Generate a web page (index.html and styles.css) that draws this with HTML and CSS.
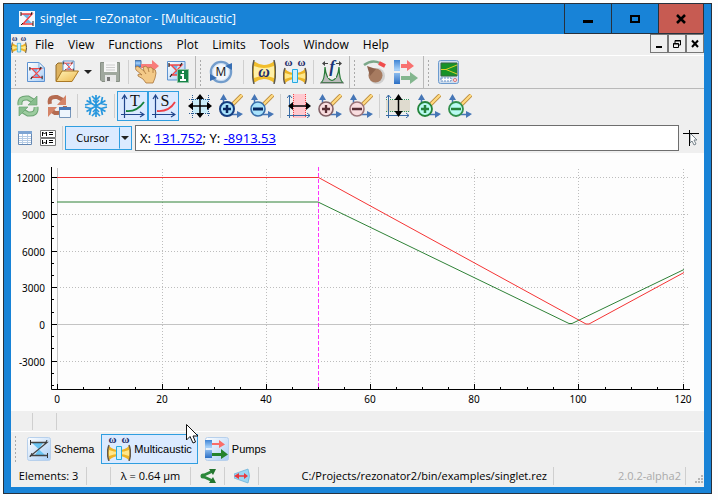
FILE: index.html
```html
<!DOCTYPE html>
<html lang="en">
<head>
<meta charset="utf-8">
<title>singlet — reZonator - [Multicaustic]</title>
<link rel="stylesheet" href="styles.css">
</head>
<body>
<svg class="defs" aria-hidden="true">
  <defs>
    <linearGradient id="paper" x1="0" y1="0" x2="1" y2="1"><stop offset="0" stop-color="#fff"/><stop offset="1" stop-color="#a9cdf5"/></linearGradient>
    <linearGradient id="folder" x1="0" y1="0" x2="1" y2="1"><stop offset="0" stop-color="#fff3b8"/><stop offset="1" stop-color="#edb94f"/></linearGradient>
    <linearGradient id="tube" x1="0" y1="0" x2="0" y2="1"><stop offset="0" stop-color="#3f84d4"/><stop offset=".4" stop-color="#a8d2fa"/><stop offset="1" stop-color="#2c6fc4"/></linearGradient>
    <symbol id="resonator" viewBox="0 0 16 16">
      <path d="M3 3 13 13H6L10 3z" fill="#6fb6ee"/>
      <path d="M1 3H14L4 13H15M3 3 13 13" stroke="#f34848" stroke-width="1.300" fill="none"/><path d="M1 1V5M14 1 12 4M4 12 2 15M15 11V15" stroke="#222" stroke-width="1.200"/>
    </symbol>
    <symbol id="app" viewBox="0 0 16 16"><path d="M0 0H16V16H0z" fill="#f5f8fc"/><path d="M3 3 13 12H6L11 3z" fill="#70b5e8"/><path d="M2 3H13L4 13H14" stroke="#ee3f43" stroke-width="1.500" fill="none"/><path d="M2 1V5M13 1 12 4M4 12 2 14M14 10V15" stroke="#222"/></symbol>
    <symbol id="new" viewBox="0 0 24 24"><path d="M3.500 2.500H15L20.500 8V21.500H3.500z" fill="url(#paper)" stroke="#5c92d2"/><path d="M15 2.500V8H20.500z" fill="#f4faff" stroke="#75a6dc"/><use href="#resonator" x="5" y="6" width="14" height="14"/></symbol>
    <symbol id="open" viewBox="0 0 24 24"><path d="M1 21V5L3 3H8L10 6H17V21z" fill="#ddb25f" stroke="#8e692b"/><path d="M8 1H19V12H8z" fill="#f3f8ff" stroke="#6296d0"/><use href="#resonator" x="8" y="1" width="11" height="11"/><path d="M1 21.500 7 11H23.500L17 21.500z" fill="url(#folder)" stroke="#aa7824"/></symbol>
    <symbol id="save" viewBox="0 0 24 24"><path d="M2.500 2.500H21.500V21.500H4L2.500 20z" fill="#a0a89e" stroke="#889086"/><path d="M6 2H19V12H6z" fill="#f6f6f6"/><path d="M8 5H17M8 7.500H17M8 10H17" stroke="#ccc"/><path d="M7 15H18V22H7z" fill="#e7e7e7"/><path d="M9 17H12V21H9z" fill="#777"/></symbol>
    <symbol id="hand" viewBox="0 0 24 24"><path d="M0 .5H6V7H0z" fill="url(#tube)" stroke="#4c78ab"/><path d="M6 4H17V0L24 6 17 12V8H6z" fill="#f87d7b"/><path d="M1 7Q1 5 4 7L9 11 8 7Q11 5 13 8Q16 6 18 9Q21 9 21 13L20 18 18 23H11L8 19 3 16Q2 14 5 14L7 15 1 10Q0 8 1 7z" fill="#f3c987" stroke="#a8743a" stroke-width=".8"/><path d="M9 11 11 14M13 8 14 12M18 9 18 13" stroke="#a8743a" stroke-width=".8"/></symbol>
    <symbol id="info" viewBox="0 0 24 24"><path d="M1.500 1.500H19V20H1.500z" fill="url(#paper)" stroke="#5d93d1"/><use href="#resonator" x="2" y="2" width="16" height="16"/><path d="M11.500 9.500H22.500V22.500H11.500z" fill="#178347" stroke="#8fc4a5"/><path d="M16 11H18V13H16zM14.500 14H18V19H20V21H14V19H16V16H14.500z" fill="#fff"/></symbol>
    <symbol id="matrix" viewBox="0 0 24 24"><circle cx="12" cy="12" r="10" fill="#f2f6fb" stroke="#739dcc" stroke-width="2.500"/><circle cx="12" cy="12" r="8.500" fill="none" stroke="#c7dcf2" stroke-width="1"/><path d="M16 6 23 3 23 10zM8 18 1 21V14z" fill="#376fb4"/><text x="12" y="16" text-anchor="middle" class="glyph-m">M</text></symbol>
    <symbol id="caustic" viewBox="0 0 24 24"><path d="M1.500 1Q12 9 22.500 1Q25 12 22.500 23Q12 15 1.500 23Q-1 12 1.500 1z" fill="#f1bd2b"/><path d="M2 6Q12 10 22 6V18Q12 14 2 18z" fill="#fff0a6"/><path d="M2 0Q-1 12 2 24M22 0Q25 12 22 24" stroke="#5d5a4c" stroke-width="1.500" fill="none"/><text x="12" y="17" text-anchor="middle" class="glyph-w">ω</text></symbol>
    <symbol id="multi" viewBox="0 0 24 24"><path d="M2 9Q6 13 12 13T22 9Q24 16 22 23Q17 19 12 19T2 23Q0 16 2 9z" fill="#edb425"/><path d="M2 13Q12 17 22 13V19Q12 15 2 19z" fill="#ffe88a"/><path d="M2 8Q-1 16 2 24M22 8Q25 16 22 24" stroke="#64594a" stroke-width="1.500" fill="none"/><path d="M9.500 9.500H14.500V22.500H9.500z" fill="#c9efff" stroke="#25aae1"/><text x="5.500" y="6" text-anchor="middle" class="glyph-ww">ω</text><text x="18.500" y="6" text-anchor="middle" class="glyph-ww">ω</text></symbol>
    <symbol id="freq" viewBox="0 0 24 24"><path d="M1 22.500Q4.500 21 5 7Q6 19 12 20.500Q18 19 19 7Q19.500 21 23 22.500z" fill="#bbb" stroke="#267a36" stroke-width="1.200"/><path d="M8 5H16V18H8z" fill="#efefef"/><path d="M0 23H24" stroke="#777"/><path d="M3 3.500H8M16 3.500H21" stroke="#444"/><path d="M2 3.500 5 1V6zM22 3.500 19 1V6z" fill="#444"/><text x="12" y="12" text-anchor="middle" class="glyph-f">f</text></symbol>
    <symbol id="pumpadj" viewBox="0 0 24 24"><path d="M1 5Q9-1 17 3" stroke="#7ca889" stroke-width="2.500" fill="none"/><path d="M16 3 22 6" stroke="#f04d4d" stroke-width="4"/><circle cx="14" cy="16" r="8" fill="#cfcfcf"/><circle cx="12.500" cy="15.500" r="7" fill="#a77b60"/><path d="M4 6 7 16 13 9z" fill="#8d624b"/></symbol>
    <symbol id="pumps" viewBox="0 0 24 24"><path d="M0 0H6V11H0zM0 13H6V24H0z" fill="url(#tube)"/><path d="M7 4H13V0L20 6 13 11V8H7z" fill="#f8716f"/><path d="M7 16H16V12L24 18 16 24V20H7z" fill="#83b68e"/></symbol>
    <symbol id="scope" viewBox="0 0 24 24"><rect x="1.500" y=".5" width="20" height="23" rx="2" fill="#cfdded" stroke="#6c9bcf"/><path d="M4 3H20V16H4z" fill="#179228" stroke="#37673e"/><path d="M4 9.500H9L20 5M9 9.500 20 14" stroke="#d8d028" fill="none"/><path d="M4 18H14V21H4z" fill="#fff" stroke="#678fc4" stroke-dasharray="2 1"/><circle cx="18" cy="20" r="1.500" fill="#fff" stroke="#df6969"/></symbol>
    <symbol id="refresh" viewBox="0 0 24 24"><path d="M4 11Q3 3 12 4L17 7M20 13Q21 21 12 20L7 17" stroke="#6ba372" stroke-width="5" fill="none"/><path d="M4 11Q3 3 12 4L17 7M20 13Q21 21 12 20L7 17" stroke="#9ccc9f" stroke-width="3" fill="none"/><path d="M21 2V11H12zM3 22V13H12z" fill="#87bd8d" stroke="#6ba372" stroke-width=".7"/></symbol>
    <symbol id="reload" viewBox="0 0 24 24"><path d="M3 10Q1 2 10 3L16 6M18 12Q18 20 8 19L5 17" stroke="#b56b50" stroke-width="4" fill="none"/><path d="M19 1V11H10zM1 23V13H10z" fill="#d58468"/><path d="M12.500 13.500H23.500V23.500H12.500z" fill="#eef5fc" stroke="#7594b8"/><path d="M12 13H24V16H12z" fill="#4978b8"/></symbol>
    <symbol id="snow" viewBox="0 0 24 24"><path fill="none" stroke="#2797de" stroke-width="1.700" d="M12 1V23M2.500 6.500 21.500 17.500M2.500 17.500 21.500 6.500M8 2 12 6 16 2M8 22 12 18 16 22M9 6 12 9 15 6M9 18 12 15 15 18M1 11 7 9.500 5.500 3M23 13 17 14.500 18.500 21M1 13 7 14.500 5.500 21M23 11 17 9.500 18.500 3"/></symbol>
    <symbol id="axes" viewBox="0 0 24 24"><path d="M3.500 24V2M0 20.500H22M1 5 3.500 1 6 5M19 18 23 20.500 19 23" stroke="#20458c" stroke-width="1.200" fill="none"/></symbol>
    <symbol id="taxis" viewBox="0 0 24 24"><use href="#axes"/><path d="M5 17Q16 18 23 8" stroke="#16813b" stroke-width="1.800" fill="none"/><text x="14" y="12" text-anchor="middle" class="glyph-t">T</text></symbol>
    <symbol id="saxis" viewBox="0 0 24 24"><use href="#axes"/><path d="M5 17Q17 18 23 8" stroke="#ef4048" stroke-width="1.800" fill="none"/><text x="13" y="12" text-anchor="middle" class="glyph-t">S</text></symbol>
    <symbol id="fit" viewBox="0 0 24 24"><path d="M5 5H20V19H5z" fill="#c9edf9"/><path d="M4.500 24V1M20.500 1V23M1 5.500H23M1 19.500H23" stroke="#285b93" stroke-dasharray="1 1"/><path d="M12 2V22M2 12H22" stroke="#000" stroke-width="1.500"/><path d="M12 0 16 5H8zM12 24 16 19H8zM0 12 5 8V16zM24 12 19 8V16z"/></symbol>
    <symbol id="lens" viewBox="0 0 24 24"><path d="M4.500 12V3M11 20.500H22" stroke="#4676b6" stroke-width="1.500"/><path d="M4.500 0 8 6H1zM24 20 18 17V24z" fill="#4676b6"/><path d="M13 11 23 1" stroke="#b98a3c" stroke-width="4"/><path d="M13 11 23 1" stroke="#ffda80" stroke-width="2.400"/></symbol>
    <symbol id="zin" viewBox="0 0 24 24"><use href="#lens"/><circle cx="8" cy="15" r="7" fill="#a9e3fc" stroke="#153e80" stroke-width="2"/><path d="M4 15H12M8 11V19" stroke="#08265e" stroke-width="2.500"/></symbol>
    <symbol id="zout" viewBox="0 0 24 24"><use href="#lens"/><circle cx="8" cy="15" r="7" fill="#a9e3fc" stroke="#386da8" stroke-width="1.600"/><path d="M3 15H13" stroke="#08265e" stroke-width="3"/></symbol>
    <symbol id="fitx" viewBox="0 0 24 24"><path d="M6 0H19V24H6z" fill="#ffc9cf"/><path d="M6.500 0V24M18.500 0V24" stroke="#ed4444" stroke-dasharray="1 1"/><path d="M2.500 24V1M0 21.500H23M0 4 2.500 1 5 4M20 19 23 21.500 20 24" stroke="#386ba4" fill="none"/><path d="M3 12H22" stroke="#000" stroke-width="1.500"/><path d="M1 12 6 8V16zM24 12 19 8V16z"/></symbol>
    <symbol id="zinx" viewBox="0 0 24 24"><use href="#lens"/><circle cx="8" cy="15" r="7" fill="#f9dddf" stroke="#826065" stroke-width="1.600"/><path d="M4 15H12M8 11V19" stroke="#572e34" stroke-width="2.300"/></symbol>
    <symbol id="zoutx" viewBox="0 0 24 24"><use href="#lens"/><circle cx="8" cy="15" r="7" fill="#f9dddf" stroke="#9b7478" stroke-width="1.600"/><path d="M3 15H13" stroke="#572e34" stroke-width="2.500"/></symbol>
    <symbol id="fity" viewBox="0 0 24 24"><path d="M0 6H24V18H0z" fill="#dfdbcf"/><path d="M0 5.500H24M0 17.500H24" stroke="#32985f" stroke-dasharray="1 1"/><path d="M2.500 24V1M0 21.500H23M0 4 2.500 1 5 4M20 19 23 21.500 20 24" stroke="#386ba4" fill="none"/><path d="M12.500 2V21" stroke="#000" stroke-width="1.500"/><path d="M12.500 0 16.500 6H8.500zM12.500 23 16.500 17H8.500z"/></symbol>
    <symbol id="ziny" viewBox="0 0 24 24"><use href="#lens"/><circle cx="8" cy="15" r="7" fill="#b9fbf2" stroke="#24843b" stroke-width="1.800"/><path d="M4 15H12M8 11V19" stroke="#26833b" stroke-width="2.500"/></symbol>
    <symbol id="zouty" viewBox="0 0 24 24"><use href="#lens"/><circle cx="8" cy="15" r="7" fill="#b9fbf2" stroke="#32904c" stroke-width="1.800"/><path d="M3 15H13" stroke="#26833b" stroke-width="2.500"/></symbol>
    <symbol id="tile" viewBox="0 0 24 24"><rect x=".5" y=".5" width="23" height="23" rx="2" fill="url(#paper)" stroke="#b7d0ec"/></symbol>
  </defs>
</svg>

<div class="window">
  <header class="titlebar">
    <svg class="i16"><use href="#app"/></svg>
    <h1>singlet — reZonator - [Multicaustic]</h1>
    <div class="winbuttons">
      <button aria-label="Minimize"><svg viewBox="0 0 12 12"><path d="M1 7H11V10H1z"/></svg></button>
      <button aria-label="Maximize"><svg viewBox="0 0 12 12"><path d="M2 3H10V9H2z" fill="none" stroke="#000" stroke-width="2"/></svg></button>
      <button class="close" aria-label="Close"><svg viewBox="0 0 12 12"><path d="M2 2 10 10M10 2 2 10" stroke="#000" stroke-width="2.500"/></svg></button>
    </div>
  </header>
  <main>
    <nav class="menu">
      <svg class="i16"><use href="#multi"/></svg>
      <button>File</button><button>View</button><button>Functions</button><button>Plot</button><button>Limits</button><button>Tools</button><button>Window</button><button>Help</button>
      <div class="mdi">
        <button aria-label="Minimize plot"><svg viewBox="0 0 10 10"><path d="M2 7H8V9H2z"/></svg></button>
        <button aria-label="Restore plot"><svg viewBox="0 0 10 10"><path d="M3 4V1.500H8.500V6H7M1.500 4.500H6.500V8.500H1.500zM3 2H9M1 5H7" fill="none" stroke="#000"/></svg></button>
        <button aria-label="Close plot"><svg viewBox="0 0 10 10"><path d="M2 1.500 8 8M8 1.500 2 8" stroke="#000" stroke-width="2"/></svg></button>
      </div>
    </nav>

    <div class="toolbars">
      <div class="toolbar">
        <i class="handle"></i>
        <button aria-label="New"><svg><use href="#new"/></svg></button>
        <button aria-label="Open"><svg><use href="#open"/></svg></button>
        <button class="drop" aria-label="Recent files"></button>
        <button aria-label="Save"><svg><use href="#save"/></svg></button>
        <i class="sep"></i>
        <button aria-label="Wavelength"><svg><use href="#hand"/></svg></button>
        <button aria-label="Schema info"><svg><use href="#info"/></svg></button>
      </div>
      <div class="toolbar">
        <i class="handle"></i>
        <button aria-label="Round-trip matrix"><svg><use href="#matrix"/></svg></button>
        <i class="sep wide"></i>
        <button aria-label="Caustic"><svg><use href="#caustic"/></svg></button>
        <button aria-label="Multicaustic function"><svg><use href="#multi"/></svg></button>
        <i class="sep"></i>
        <button aria-label="Frequencies"><svg><use href="#freq"/></svg></button>
      </div>
      <div class="toolbar">
        <i class="handle"></i>
        <button aria-label="Adjust"><svg><use href="#pumpadj"/></svg></button>
        <button aria-label="Show pumps"><svg><use href="#pumps"/></svg></button>
      </div>
      <div class="toolbar">
        <i class="handle"></i>
        <button aria-label="Stability map"><svg><use href="#scope"/></svg></button>
      </div>
    </div>

    <div class="plotbar">
      <button aria-label="Update"><svg><use href="#refresh"/></svg></button>
      <button aria-label="Update parameters"><svg><use href="#reload"/></svg></button>
      <i class="sep"></i>
      <button aria-label="Freeze"><svg><use href="#snow"/></svg></button>
      <i class="sep"></i>
      <button class="on" aria-label="Tangential plane"><svg><use href="#taxis"/></svg></button>
      <button class="on" aria-label="Sagittal plane"><svg><use href="#saxis"/></svg></button>
      <i class="space"></i>
      <button aria-label="Fit limits"><svg><use href="#fit"/></svg></button>
      <button aria-label="Zoom in"><svg><use href="#zin"/></svg></button>
      <button aria-label="Zoom out"><svg><use href="#zout"/></svg></button>
      <i class="sep"></i>
      <button aria-label="Fit X"><svg><use href="#fitx"/></svg></button>
      <button aria-label="Zoom in X"><svg><use href="#zinx"/></svg></button>
      <button aria-label="Zoom out X"><svg><use href="#zoutx"/></svg></button>
      <i class="sep"></i>
      <button aria-label="Fit Y"><svg><use href="#fity"/></svg></button>
      <button aria-label="Zoom in Y"><svg><use href="#ziny"/></svg></button>
      <button aria-label="Zoom out Y"><svg><use href="#zouty"/></svg></button>
    </div>

    <div class="cursorbar">
      <button class="mini" aria-label="Data table"><svg class="i16" viewBox="0 0 16 16"><path d="M1.500 1.500H14.500V14.500H1.500z" fill="#fff" stroke="#6588b3"/><path d="M1 1H15V4H1z" fill="#7ea5d3"/><path d="M2 6.500H14M2 8.500H14M2 10.500H14M2 12.500H14M5.500 4V14M10.500 4V14" stroke="#b6cce5"/></svg></button>
      <button class="mini" aria-label="Markers"><svg class="i16" viewBox="0 0 16 16"><path d="M.5.500H15.500V7.500H.5zM.5 8.500H15.500V15.500H.5z" fill="#fff" stroke="#777"/><path d="M2.500 6V2L4.500 4 6.500 2V6M2.500 10V14L4.500 12 6.500 14V10M9 2.500H13M9 4.500H13M9 10.500H13M9 12.500H13" stroke="#000" fill="none"/></svg></button>
      <i class="sep"></i>
      <div class="split"><button>Cursor</button><button class="drop" aria-label="Cursor options"></button></div>
      <output class="coords">X: <a href="#x">131.752</a>; Y: <a href="#y">-8913.53</a></output>
      <svg class="track" viewBox="0 0 18 18"><path d="M8 4 15 11H12L14 15 12 16 10 12 8 14z" fill="#fff" stroke="#77838b"/><path d="M1 4.500H17M7.500 1V17" stroke="#000"/></svg>
    </div>

    <svg class="plot" viewBox="11 153 693 258" role="img" aria-label="Multicaustic plot">
      <g class="grid">
        <path d="M57 177.500H689M57 214.500H689M57 251.500H689M57 287.500H689M57 361.500H689"/>
        <path d="M162.500 169V389M266.500 169V389M370.500 169V389M474.500 169V389M578.500 169V389M683.500 169V389"/>
      </g>
      <path class="zero" d="M57.500 168V389M52 324.500H689"/>
      <path class="axis" d="M51.500 167V389.500H690M51 177.500H57M51 214.500H57M51 251.500H57M51 287.500H57M51 324.500H57M51 361.500H57M57.500 389V384M162.500 389V384M266.500 389V384M370.500 389V384M474.500 389V384M578.500 389V384M683.500 389V384"/>
      <path class="axis" d="M51 189.500H54M51 202.500H54M51 226.500H54M51 238.500H54M51 263.500H54M51 275.500H54M51 299.500H54M51 312.500H54M51 336.500H54M51 348.500H54M51 373.500H54M51 385.500H54M83.500 389V387M109.500 389V387M135.500 389V387M188.500 389V387M214.500 389V387M240.500 389V387M292.500 389V387M318.500 389V387M344.500 389V387M396.500 389V387M422.500 389V387M448.500 389V387M500.500 389V387M527.500 389V387M553.500 389V387M605.500 389V387M631.500 389V387M657.500 389V387"/>
      <path class="tan" d="M57 202H318L569 323.500H572L684 269.500"/>
      <path class="sag" d="M57 177.500H318.500L586 324H589L684 272.500"/>
      <path class="mark" d="M318.500 167V389"/>
      <g class="ylabels"><text x="45" y="182">12000</text><text x="45" y="219">9000</text><text x="45" y="256">6000</text><text x="45" y="292">3000</text><text x="45" y="329">0</text><text x="45" y="366">-3000</text></g>
      <g class="xlabels"><text x="57" y="403">0</text><text x="162" y="403">20</text><text x="266" y="403">40</text><text x="370" y="403">60</text><text x="474" y="403">80</text><text x="578" y="403">100</text><text x="683" y="403">120</text></g>
    </svg>

    <div class="plotstatus"><i></i><i></i></div>

    <div class="tabs">
      <i class="handle"></i>
      <button><svg viewBox="0 0 24 24"><use href="#tile"/><path d="M5 6 18 18H8L16 6z" fill="#69c3f2"/><path d="M3 5.500H20L4 18.500H20" stroke="#444" fill="none" stroke-width="1.300"/><path d="M3.500 3V8M20 3 18 7M5 16 3 20M20.500 16V21" stroke="#333"/></svg>Schema</button>
      <button class="on"><svg><use href="#multi"/></svg>Multicaustic</button>
      <button><svg viewBox="0 0 24 24"><use href="#tile"/><path d="M0 3H7V11H0zM0 13H7V21H0z" fill="url(#tube)"/><path d="M7 6H14V3L20 7.500 14 11V8H7z" fill="#fa6d69"/><path d="M7 16H16V12L23 17.500 16 22V19H7z" fill="#24832b"/></svg>Pumps</button>
    </div>

    <footer class="status">
      <span class="c1">Elements: 3</span><span class="c2"></span><span class="c3">λ = 0.64 µm</span>
      <span class="c4"><svg class="i16" viewBox="0 0 16 16"><path d="M2 8 13 3M2 8 13 13" stroke="#2c883b" stroke-width="2.500"/><circle cx="3" cy="8" r="2.500" fill="#2c883b"/><path d="M16 1 13 7 9 1zM16 15 9 15 13 9z" fill="#23752f"/></svg></span>
      <span class="c4"><svg class="i16" viewBox="0 0 16 16"><path d="M0 6 14 1Q17 8 14 15L0 10z" fill="#9bd6f3" stroke="#67aed6" stroke-width=".7"/><path d="M2 8H12" stroke="#e8373d" stroke-width="1.500"/><path d="M0 8 5 5V11zM14 8 10 5V11z" fill="#e8373d"/></svg></span>
      <span class="path">C:/Projects/rezonator2/bin/examples/singlet.rez</span>
      <span class="version">2.0.2-alpha2</span>
      <svg class="grip" viewBox="0 0 9 9"><path d="M7 1H9M4 4H6M7 4H9M1 7H3M4 7H6M7 7H9" stroke="#b5b5b5" stroke-width="2"/></svg>
    </footer>
  </main>
  <svg class="pointer" viewBox="0 0 13 20"><path d="M.5.500V16L4 12.500 7 19 9.500 18 7 12H12z" fill="#fff" stroke="#111"/></svg>
</div>
</body>
</html>
```

FILE: styles.css
```css
* { box-sizing: border-box; }
body { margin: 0; padding: 3px 6px 6px 3px; background: #fdfdfd; font: 12px/16px "Open Sans", sans-serif; color: #000; }
button { font: inherit; color: inherit; border: 1px solid transparent; background: none; padding: 0; margin: 0; }
svg { display: block; flex: none; }
i { flex: none; }
.defs { position: absolute; width: 0; height: 0; }
.i16 { width: 16px; height: 16px; }
.window { position: relative; background: #1883d7; border: 1px solid #27313d; padding: 0 7px 6px; }

.titlebar { display: flex; align-items: center; height: 30px; gap: 5px; padding-left: 8px; color: #fff; }
.titlebar h1 { flex: 1; margin: 0; font-size: 12px; font-weight: 400; }
.winbuttons { display: flex; align-self: stretch; }
.winbuttons button { display: grid; place-items: center; width: 47px; border: 1px solid #27313d; border-top: 0; border-right: 0; }
.winbuttons svg { width: 12px; height: 12px; }
.winbuttons .close { background: #c75b52; border-right: 1px solid #27313d; width: 46px; }

main { background: #efefef; }
.menu { display: flex; height: 22px; align-items: center; border-bottom: 1px solid #fff; }
.menu > button { padding: 0 5px 0 7px; height: 20px; }
.mdi { display: flex; margin-left: auto; align-self: flex-start; }
.mdi button { display: grid; place-items: center; width: 18px; height: 19px; border: 1px solid #777; }
.mdi svg { width: 10px; height: 10px; }

.toolbars { display: flex; height: 33px; border-bottom: 1px solid #b9b9b9; }
.toolbar { display: flex; align-items: center; border-right: 1px solid #b9b9b9; padding-right: 2px; }
.toolbar:last-child { border: 0; }
.toolbar button, .plotbar button { display: grid; place-items: center; width: 31px; height: 30px; }
.toolbar svg, .plotbar svg, .tabs svg { width: 24px; height: 24px; }
.handle { width: 3px; height: 27px; margin: 0 3px; background: radial-gradient(circle, #aaa 1px, transparent 1px) 0 0 / 3px 4px; }
.sep { width: 1px; height: 24px; margin: 0 2px 0 3px; background: #cfcfcf; }
.sep.wide { margin: 0 4px 0 7px; }
.toolbar .drop { width: 12px; }
.drop::before { content: ""; border: 4px solid transparent; border-top-color: #222; border-bottom: 0; }

.plotbar { display: flex; align-items: center; height: 34px; padding-left: 1px; }
.plotbar .on, .tabs .on { background: #dbeaff; border-color: #2f9ee0; }
.space { width: 5px; }

.cursorbar { display: flex; align-items: center; height: 30px; padding: 0 4px 0 2px; }
.cursorbar .mini { display: grid; place-items: center; width: 23px; height: 23px; }
.split { display: flex; height: 24px; background: #dbeaff; border: 1px solid #2f9ee0; margin-right: 3px; }
.split button { width: 53px; font: 11px/22px "DejaVu Sans Condensed", sans-serif; }
.split .drop { display: grid; place-items: center; width: 12px; border-left: 1px solid #2f9ee0; }
.coords { flex: 1; height: 26px; padding-left: 4px; background: #fff; border: 1px solid #6e6e6e; font: 13px/24px "Noto Sans", sans-serif; }
.coords a { color: #00f; }
.track { width: 18px; height: 18px; margin-left: 3px; }

.plot { width: 100%; height: auto; background: #fdfdfd; fill: none; font: 10px "Noto Sans", sans-serif; }
.plot text { fill: #000; }
.grid { stroke: #bdbdbd; stroke-dasharray: 1 2; }
.zero { stroke: #c4c4c4; }
.axis { stroke: #000; }
.tan { stroke: #2e8136; }
.sag { stroke: #f53434; }
.mark { stroke: #f3f; stroke-dasharray: 4 2; }
.ylabels { text-anchor: end; }
.xlabels { text-anchor: middle; }

.plotstatus { display: flex; height: 21px; border-bottom: 1px solid #fff; padding: 2px 0 1px 21px; gap: 23px; }
.plotstatus i { width: 1px; background: #cfcfcf; }
.tabs { display: flex; align-items: center; height: 33px; font: 11px/16px "Liberation Sans", sans-serif; }
.tabs .handle { margin-right: 4px; }
.tabs button { display: flex; align-items: center; gap: 3px; height: 30px; padding: 0 5px; margin-right: 1px; }
.status { display: flex; align-items: center; height: 22px; font-size: 11px; }
.status span { display: flex; height: 18px; align-items: center; justify-content: center; border-right: 1px solid #cfcfcf; }
.status .c1 { width: 76px; }
.status .c2 { width: 24px; }
.status .c3 { width: 80px; }
.status .c4 { width: 34px; }
.status .path { flex: 1; justify-content: flex-end; padding-right: 6px; }
.status .version { width: 132px; justify-content: flex-end; padding-right: 4px; color: #aaa; }
.grip { width: 9px; height: 9px; margin: 6px 1px 0 8px; }
.pointer { position: absolute; left: 182px; top: 420px; width: 13px; height: 20px; }

.glyph-m { font: 12px "Open Sans", sans-serif; fill: #111; }
.glyph-w { font: italic bold 16px "Liberation Serif", serif; fill: #1c2b68; }
.glyph-ww { font: bold 11px "Liberation Serif", serif; fill: #1c2b68; }
.glyph-f { font: italic bold 17px "Liberation Serif", serif; fill: #183579; }
.glyph-t { font: 16px "Liberation Serif", serif; fill: #111; }
```
